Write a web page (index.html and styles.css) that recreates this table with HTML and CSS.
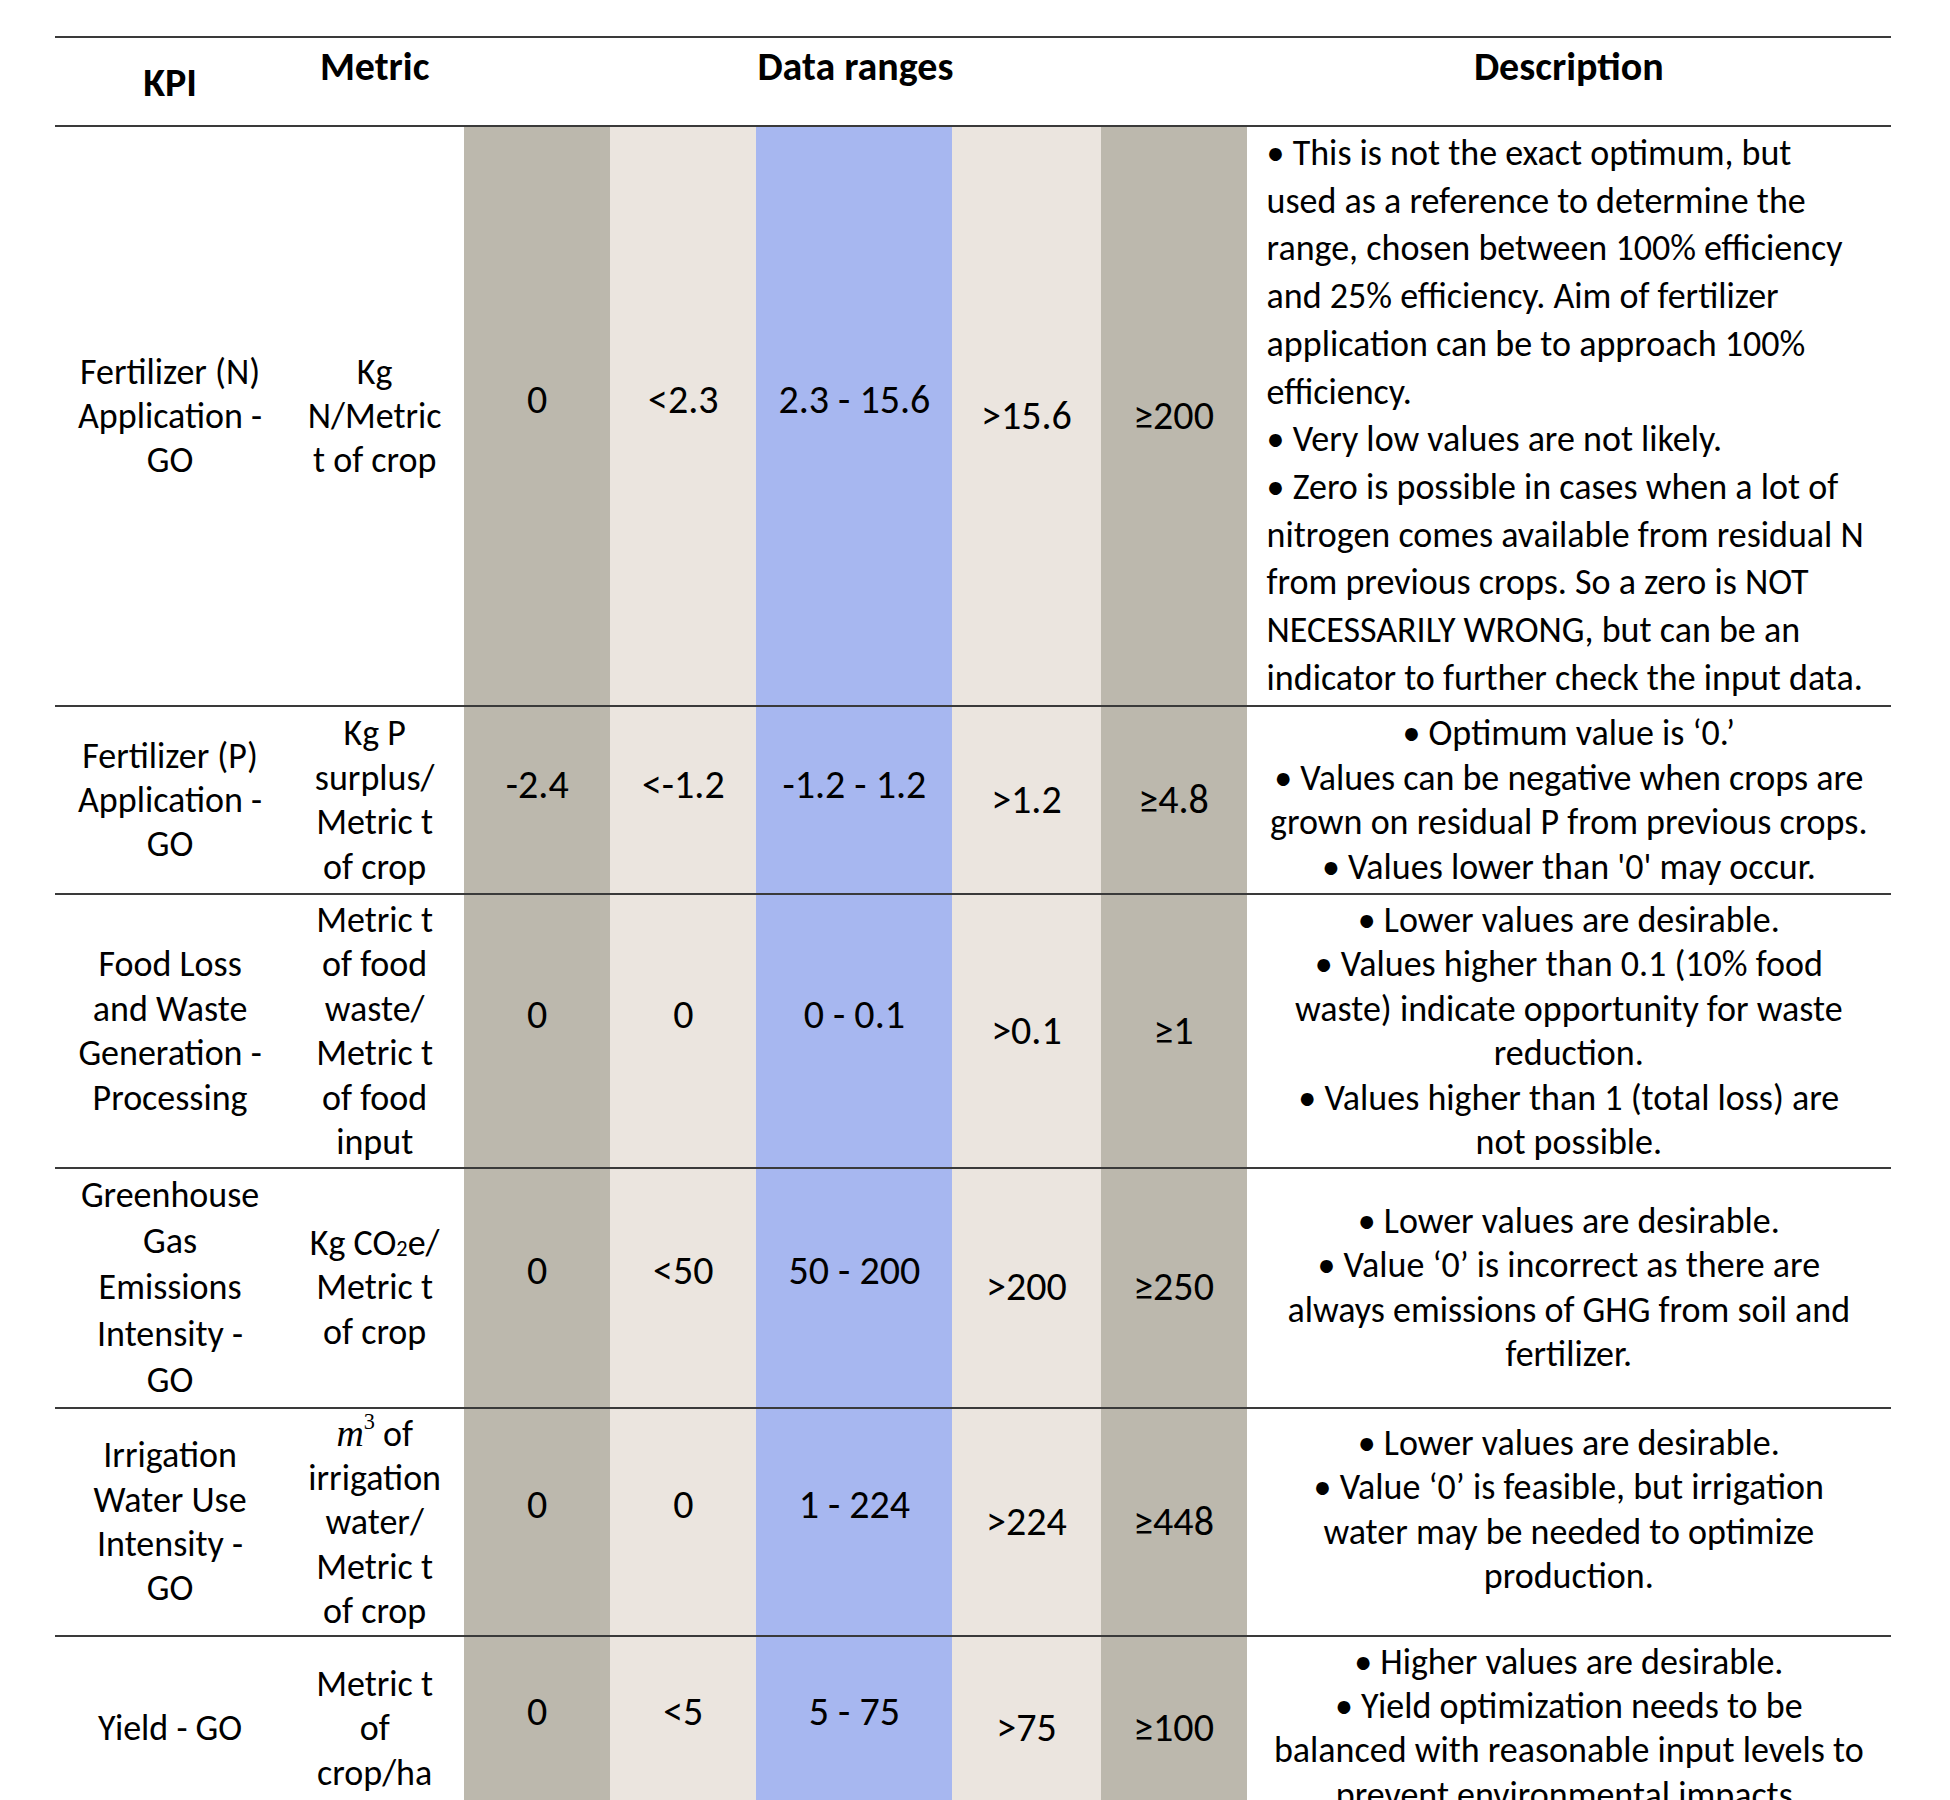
FILE: index.html
```html
<!DOCTYPE html>
<html lang="en">
<head>
<meta charset="utf-8">
<title>KPI data ranges</title>
<link rel="stylesheet" href="styles.css">
</head>
<body>
<div class="sheet">
<table class="kpi-table">
  <colgroup>
    <col class="c-kpi"><col class="c-metric"><col class="c-range"><col class="c-range"><col class="c-opt"><col class="c-range2"><col class="c-range"><col class="c-desc">
  </colgroup>
  <thead>
    <tr>
      <th class="h-kpi">KPI</th>
      <th>Metric</th>
      <th colspan="5">Data ranges</th>
      <th>Description</th>
    </tr>
  </thead>
  <tbody>
    <tr>
      <td class="kpi">Fertilizer (N)<br>Application -<br>GO</td>
      <td class="metric">Kg<br>N/Metric<br>t of crop</td>
      <td class="val r-low up">0</td>
      <td class="val r-mid up">&lt;2.3</td>
      <td class="val r-opt up">2.3 - 15.6</td>
      <td class="val r-mid">&gt;15.6</td>
      <td class="val r-low">≥200</td>
      <td class="desc desc-left">• This is not the exact optimum, but<br>used as a reference to determine the<br>range, chosen between 100% efficiency<br>and 25% efficiency. Aim of fertilizer<br>application can be to approach 100%<br>efficiency.<br>• Very low values are not likely.<br>• Zero is possible in cases when a lot of<br>nitrogen comes available from residual N<br>from previous crops. So a zero is NOT<br>NECESSARILY WRONG, but can be an<br>indicator to further check the input data.</td>
    </tr>
    <tr class="row-loose">
      <td class="kpi">Fertilizer (P)<br>Application -<br>GO</td>
      <td class="metric">Kg P<br>surplus/<br>Metric t<br>of crop</td>
      <td class="val r-low up">-2.4</td>
      <td class="val r-mid up">&lt;-1.2</td>
      <td class="val r-opt up">-1.2 - 1.2</td>
      <td class="val r-mid">&gt;1.2</td>
      <td class="val r-low">≥4.8</td>
      <td class="desc">• Optimum value is ‘0.’<br>• Values can be negative when crops are<br>grown on residual P from previous crops.<br>• Values lower than '0' may occur.</td>
    </tr>
    <tr class="row-snug">
      <td class="kpi">Food Loss<br>and Waste<br>Generation -<br>Processing</td>
      <td class="metric">Metric t<br>of food<br>waste/<br>Metric t<br>of food<br>input</td>
      <td class="val r-low up">0</td>
      <td class="val r-mid up">0</td>
      <td class="val r-opt up">0 - 0.1</td>
      <td class="val r-mid">&gt;0.1</td>
      <td class="val r-low">≥1</td>
      <td class="desc">• Lower values are desirable.<br>• Values higher than 0.1 (10% food<br>waste) indicate opportunity for waste<br>reduction.<br>• Values higher than 1 (total loss) are<br>not possible.</td>
    </tr>
    <tr>
      <td class="kpi kpi-tall">Greenhouse<br>Gas<br>Emissions<br>Intensity -<br>GO</td>
      <td class="metric">Kg CO<span class="sub">2</span>e/<br>Metric t<br>of crop</td>
      <td class="val r-low up">0</td>
      <td class="val r-mid up">&lt;50</td>
      <td class="val r-opt up">50 - 200</td>
      <td class="val r-mid">&gt;200</td>
      <td class="val r-low">≥250</td>
      <td class="desc">• Lower values are desirable.<br>• Value ‘0’ is incorrect as there are<br>always emissions of GHG from soil and<br>fertilizer.</td>
    </tr>
    <tr class="row-tight">
      <td class="kpi">Irrigation<br>Water Use<br>Intensity -<br>GO</td>
      <td class="metric"><span class="math"><i>m</i><sup>3</sup></span> of<br>irrigation<br>water/<br>Metric t<br>of crop</td>
      <td class="val r-low up">0</td>
      <td class="val r-mid up">0</td>
      <td class="val r-opt up">1 - 224</td>
      <td class="val r-mid">&gt;224</td>
      <td class="val r-low">≥448</td>
      <td class="desc desc-raised">• Lower values are desirable.<br>• Value ‘0’ is feasible, but irrigation<br>water may be needed to optimize<br>production.</td>
    </tr>
    <tr>
      <td class="kpi">Yield - GO</td>
      <td class="metric">Metric t<br>of<br>crop/ha</td>
      <td class="val r-low up">0</td>
      <td class="val r-mid up">&lt;5</td>
      <td class="val r-opt up">5 - 75</td>
      <td class="val r-mid">&gt;75</td>
      <td class="val r-low">≥100</td>
      <td class="desc">• Higher values are desirable.<br>• Yield optimization needs to be<br>balanced with reasonable input levels to<br>prevent environmental impacts.</td>
    </tr>
  </tbody>
</table>
</div>
</body>
</html>
```

FILE: styles.css
```css
html, body {
  margin: 0;
  padding: 0;
  background: #ffffff;
}

body {
  font-family: Carlito, Calibri, "Liberation Sans Narrow", "Open Sans", sans-serif;
  color: #000000;
}

.sheet {
  padding: 36px 0 0 55px;
}

.kpi-table {
  border-collapse: collapse;
  table-layout: fixed;
  width: 1836px;
  font-size: 36px;
  line-height: 44.4px;
}

.c-kpi { width: 230px; }
.c-metric { width: 179px; }
.c-range { width: 146px; }
.c-range2 { width: 148px; }
.c-opt { width: 196px; }
.c-desc { width: 644px; }

.kpi-table th {
  font-size: 40px;
  line-height: 48px;
  font-weight: 700;
  text-align: center;
  vertical-align: top;
  padding: 5px 0 34px;
  border-top: 2px solid #3a3a3a;
  border-bottom: 2px solid #3a3a3a;
}

.kpi-table th.h-kpi {
  padding: 21px 0 18px;
}

.kpi-table td {
  border-top: 2px solid #3a3a3a;
  padding: 3px 0;
  text-align: center;
  vertical-align: middle;
  font-weight: 400;
}

.kpi-table .row-loose td {
  padding-top: 4px;
  padding-bottom: 4px;
}

.kpi-table .row-snug td {
  padding-top: 3px;
  padding-bottom: 2px;
}

.kpi-table .row-tight td {
  padding-top: 2px;
  padding-bottom: 1px;
}

.kpi-table td.val {
  font-size: 40px;
}

.r-low { background: #bcb8ad; }
.r-mid { background: #ebe5df; }
.r-opt { background: #a7b7f0; }

.kpi-table tr td.up { padding-bottom: 35px; }

.kpi-table td.kpi-tall { line-height: 46.4px; }

.kpi-table td.desc-left {
  text-align: left;
  padding-left: 20px;
  line-height: 47.7px;
}

.kpi-table tr td.desc-raised { padding-bottom: 26px; }

.sub {
  font-size: 0.62em;
  line-height: 0;
  vertical-align: -0.05em;
}

.math {
  font-family: "Liberation Serif", "DejaVu Serif", serif;
}

.math i {
  font-size: 1.05em;
}

.math sup {
  font-size: 0.62em;
  line-height: 0;
  vertical-align: 0.75em;
}
```
